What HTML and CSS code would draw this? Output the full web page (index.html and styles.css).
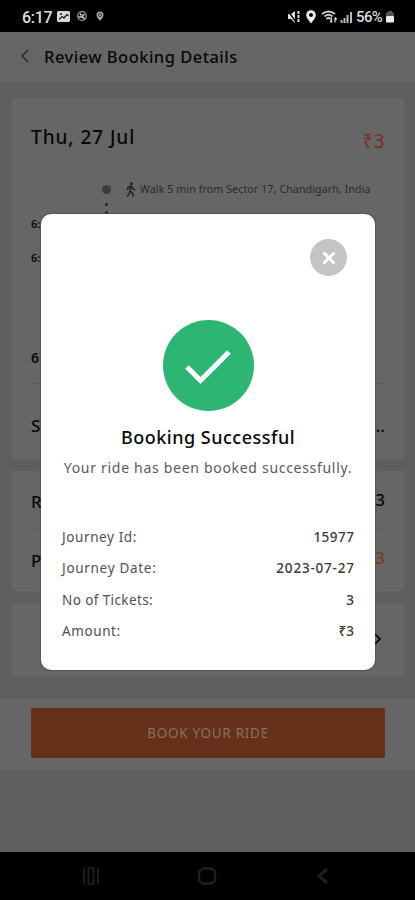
FILE: index.html
```html
<!DOCTYPE html>
<html lang="en">
<head>
<meta charset="utf-8">
<title>Review Booking Details</title>
<link rel="stylesheet" href="styles.css">
</head>
<body>
<div class="screen">
  <div class="status">
    <span class="clock">6:17</span>
    <svg class="st-left" width="50" height="14" viewBox="0 0 50 14">
      <rect x="0" y="1" width="13" height="11" rx="1.500" fill="#d8d8d8"/>
      <path d="M2 9.500l3-3 2 1.500L10 4.500l1.500 1.500" fill="none" stroke="#222" stroke-width="1.300"/><circle cx="4" cy="4" r="1" fill="#222"/>
      <circle cx="25" cy="6" r="4.300" fill="none" stroke="#999" stroke-width="1.300"/>
      <path d="M21.500 7h3l3-3M25 6l2.500 3M23 3.500l1.500 2" fill="none" stroke="#ccc" stroke-width="1.500"/>
      <path d="M43 11C41 8 39.500 7 39.500 5a3.500 3.500 0 0 1 7 0c0 2-1.500 3-3.500 6z" fill="#aaa"/><circle cx="43" cy="5" r="1.600" fill="none" stroke="#333"/>
    </svg>
    <svg class="st-right" width="66" height="16" viewBox="0 0 66 16">
      <path d="M1 5h3l4-3v12l-4-4H1z" fill="#ddd"/><path d="M1 2l8 11" stroke="#000" stroke-width="1.300"/><path d="M11.500 2v12" stroke="#ddd" stroke-width="2" stroke-dasharray="3 1"/>
      <path d="M24 14.500c-3-4-4.800-6-4.800-8.500a4.800 4.800 0 0 1 9.600 0c0 2.500-1.800 4.500-4.800 8.500z" fill="#eee"/><circle cx="24" cy="6" r="2" fill="#000"/>
      <path d="M35 5q6.500-5 13 0M37.500 7.500q4-3.500 8 0M39.500 10q2-2 4 0" fill="none" stroke="#ccc" stroke-width="1.900"/><path d="M44.500 13.500V8.500M44.500 13.500l-1.500-1.800M48 8.500v5M48 8.500l1.700 2" fill="none" stroke="#ddd" stroke-width="1.200"/>
      <path d="M54.500 14v-3M57.500 14V9M60.500 14V6M64 14V3" stroke="#bbb" stroke-width="2"/>
    </svg>
    <span class="battery">56%</span>
    <svg class="st-bat" width="10" height="14" viewBox="0 0 10 14"><path d="M3 1h4v1.500h2V6H1V2.500h2z" fill="#555"/><rect x="1" y="6" width="8" height="6.500" rx="1" fill="#eee"/></svg>
  </div>
  <div class="header">
    <svg width="8" height="14" viewBox="0 0 8 14"><path d="M7 1L1 7l6 6" fill="none" stroke="#222" stroke-width="1.300"/></svg>
    <span class="title">Review Booking Details</span>
  </div>
  <div class="content">
    <div class="card trip">
      <div class="trip-head"><span class="date">Thu, 27 Jul</span><span class="fare">₹3</span></div>
      <div class="walk">
        <span class="dot"></span>
        <svg width="10" height="15" viewBox="0 0 10 15"><circle cx="5.500" cy="1.700" r="1.500" fill="#222"/><path d="M5 4L4 9l2.500 2 .7 3.500M4 9l-1 3-1.800 2.500M5 4L2 5.500 1.500 8M5.500 4.500L7 7l2.200 1" fill="none" stroke="#222" stroke-width="1.500"/></svg>
        <span class="walk-text">Walk 5 min from Sector 17, Chandigarh, India</span>
      </div>
      <div class="dots"></div>
      <div class="time t1">6:</div>
      <div class="time t2">6:</div>
      <div class="time t3">6</div>
      <div class="divider"></div>
      <div class="row seat"><span>S</span><span>..</span></div>
    </div>
    <div class="card fares">
      <div class="row"><span class="label">R</span><span>3</span></div>
      <div class="row total"><span class="label">P</span><span class="orange">3</span></div>
    </div>
    <div class="card more"><svg width="8" height="12" viewBox="0 0 8 12"><path d="M1 1l5 5-5 5" fill="none" stroke="#000" stroke-width="1.700"/></svg></div>
  </div>
  <div class="footer"><div class="book">BOOK YOUR RIDE</div></div>
  <div class="nav">
    <svg width="18" height="18" viewBox="0 0 18 18"><path d="M2 1v16M16 1v16M6.500 1h5v16h-5z" fill="none" stroke="#1c1c1c" stroke-width="2"/></svg>
    <svg width="20" height="18" viewBox="0 0 20 18"><rect x="2" y="1.500" width="16" height="15" rx="5" fill="none" stroke="#1f1f1f" stroke-width="2.500"/></svg>
    <svg width="12" height="18" viewBox="0 0 12 18"><path d="M11 2L3 9l8 7" fill="none" stroke="#1f1f1f" stroke-width="3"/></svg>
  </div>
  <div class="modal">
    <div class="close"><svg width="14" height="14" viewBox="0 0 14 14"><path d="M1.500 1.500l11 11M12.500 1.500l-11 11" stroke="#fff" stroke-width="3"/></svg></div>
    <div class="success"><svg width="46" height="36" viewBox="0 0 46 36"><path d="M2 18l13.500 13.500L44 3" fill="none" stroke="#fff" stroke-width="5"/></svg></div>
    <div class="m-title"><span>Booking Successful</span></div>
    <div class="m-sub"><span>Your ride has been booked successfully.</span></div>
    <div class="details">
      <div class="detail"><span class="k1">Journey Id:</span><b class="v1">15977</b></div>
      <div class="detail"><span class="k2">Journey Date:</span><b class="v2">2023-07-27</b></div>
      <div class="detail"><span class="k3">No of Tickets:</span><b>3</b></div>
      <div class="detail"><span class="k4">Amount:</span><b>₹3</b></div>
    </div>
  </div>
</div>
</body>
</html>
```
FILE: styles.css
```css
* { box-sizing: border-box; }
body { margin: 0; font-family: "Noto Sans", sans-serif; background: #000; }
svg { display: block; flex: none; }
span, b { white-space: nowrap; }
.screen { position: relative; width: 415px; height: 900px; background: #5f5f62; display: flex; flex-direction: column; overflow: hidden; }
.status { height: 32px; background: #000; display: flex; align-items: center; padding: 2px 20px 0 22px; color: #ddd; font-family: Roboto, sans-serif; font-weight: 500; flex: none; }
.clock { font-size: 16px; width: 35px; letter-spacing: -0.3px; }
.st-right { margin-left: auto; }
.battery { font-size: 15px; margin-left: 3px; letter-spacing: -0.6px; width: 29px; }
.header { height: 50px; background: #666; display: flex; align-items: center; padding: 0 0 2px 21px; gap: 15px; flex: none; }
.title { font-size: 16.5px; font-weight: 500; color: #080808; letter-spacing: 0.48px; }
.content { height: 615px; padding: 15px 10px 0 11px; display: flex; flex-direction: column; gap: 10px; flex: none; }
.card { background: #666; border: 1px solid #606062; border-radius: 2px; flex: none; }
.trip { height: 363px; padding: 0 19px; }
.trip-head { height: 80px; display: flex; justify-content: space-between; align-items: center; }
.date { font-size: 19px; font-weight: 500; color: #080808; letter-spacing: 0.95px; padding-bottom: 2px; }
.fare { font-size: 19px; color: #7b2d22; padding-top: 5px; letter-spacing: 0.4px; }
.walk { display: flex; align-items: center; padding: 0 0 2px 71px; height: 24px; }
.dot { width: 9px; height: 9px; border-radius: 50%; background: #3d3d3d; margin-right: 15px; }
.walk-text { font-size: 10.5px; color: #292929; margin-left: 4px; letter-spacing: 0.16px; }
.dots { height: 14px; margin-left: 74px; width: 3px; background: repeating-linear-gradient(transparent 0 1px, #333 1px 4px, transparent 4px 8px); }
.time { font-size: 11px; font-weight: 600; color: #080808; line-height: 16px; height: 34px; }
.t2 { height: 100px; }
.t3 { font-size: 14px; height: 33px; }
.divider { border-top: 1px dashed #5a5654; }
.row { display: flex; justify-content: space-between; align-items: center; font-size: 17px; font-weight: 500; color: #080808; }
.seat { height: 77px; padding-top: 6px; }
.fares { height: 122px; padding: 0 19px; }
.fares .row { height: 58px; padding-bottom: 2px; }
.fares .total { border-top: 1px solid #5f5f60; }
.label { padding-top: 5px; }
.orange { color: #783b20; }
.more { height: 76px; display: flex; align-items: center; justify-content: flex-end; padding: 0 22px 3px 0; }
.footer { height: 73px; background: #666; border-top: 1px solid #585858; padding: 10px 30px 0 31px; flex: none; margin-bottom: 82px; }
.book { height: 50px; background: #66301b; border-radius: 2px; display: flex; align-items: center; justify-content: center; font-size: 13.5px; color: #86705f; letter-spacing: 0.7px; }
.nav { height: 48px; background: #000; display: flex; align-items: center; padding-left: 82px; flex: none; }
.nav svg + svg { margin-left: 97px; }
.nav svg + svg + svg { margin-left: 99px; }
.modal { position: absolute; left: 41px; top: 214px; width: 334px; height: 456px; background: #fff; border-radius: 10px; padding: 25px 21px 0; box-shadow: 0 0 2px #333; }
.close { width: 37px; height: 37px; border-radius: 50%; background: #c4c4c4; margin: 0 7px 0 auto; display: flex; align-items: center; justify-content: center; }
.success { width: 91px; height: 91px; border-radius: 50%; background: #2db574; margin: 44px auto 0; display: flex; align-items: center; justify-content: center; }
.success svg { margin-top: 3px; }
.m-title { height: 30px; margin-top: 11px; text-align: center; font-size: 18px; line-height: 30px; font-weight: 500; color: #080808; letter-spacing: 0.5px; }
.m-sub { display: flex; justify-content: center; height: 30px; font-size: 14px; line-height: 31px; color: #5a5a5a; letter-spacing: 0.7px; }
.details { margin-top: 40px; }
.detail { display: flex; justify-content: space-between; height: 31.300px; line-height: 31px; font-size: 13.5px; color: #505050; }
.detail b { font-weight: 500; color: #383838; }
.k1 { letter-spacing: 0.6px; }
.k2 { letter-spacing: 0.7px; }
.k3 { letter-spacing: 0.4px; }
.k4 { letter-spacing: 0.6px; }
.v1 { letter-spacing: 0.5px; margin-right: -0.5px; }
.v2 { letter-spacing: 0.8px; margin-right: -0.8px; }
```
